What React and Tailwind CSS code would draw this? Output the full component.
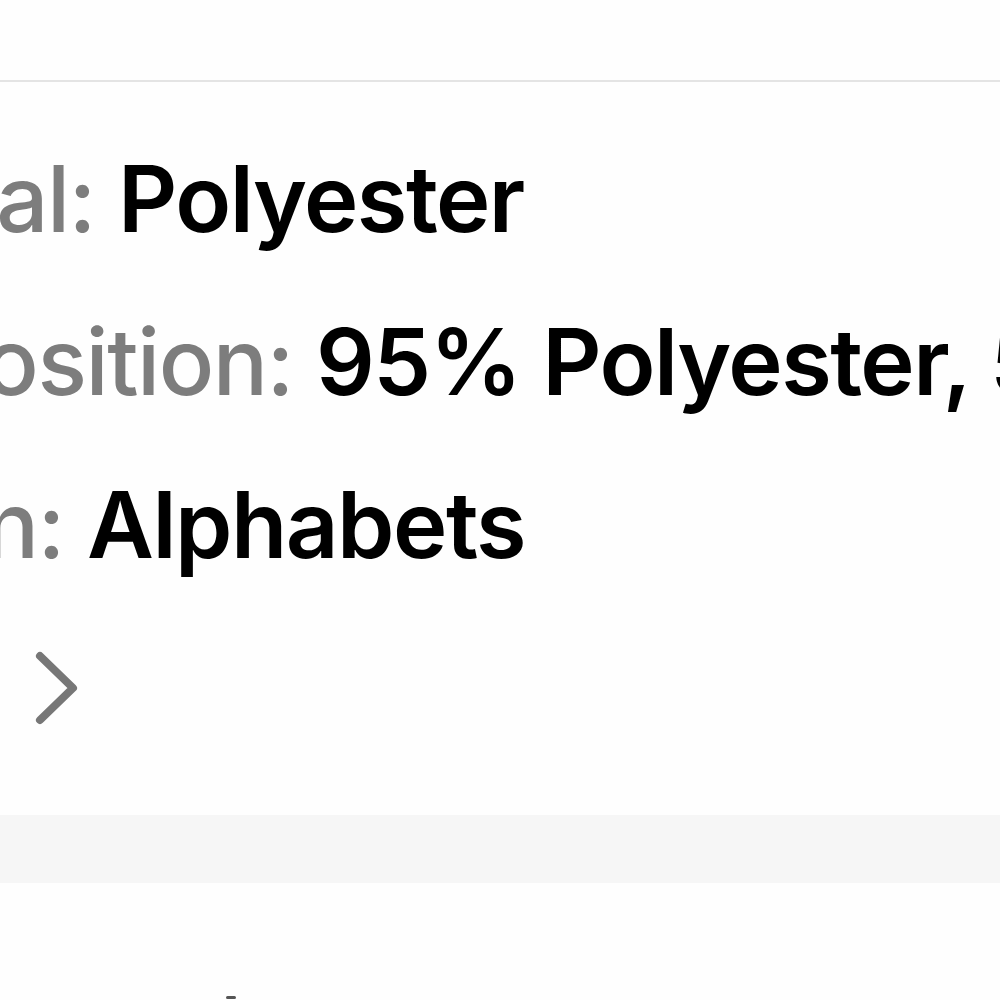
const rows = [
    { label: "Material:", value: "Polyester", box: "w-[118px]" },
    { label: "Composition:", value: "95% Polyester, 5% Spandex", box: "w-[316px]" },
    { label: "Pattern:", value: "Alphabets", box: "w-[87px]" },
];

export default function App() {
    return (
        <div className="h-[1000px] w-[1000px] overflow-hidden bg-[#fefefe] font-['Inter','Liberation_Sans',sans-serif]">
            {/* ヘッダー下の区切り線 */}
            <div className="h-[80px]" />
            <div className="h-[2px] bg-[#e4e4e4]" />

            {/* 商品詳細 */}
            <div className="pt-[35px]">
                {rows.map(row => (
                    <div key={row.label} className="flex h-[163px] items-center whitespace-nowrap text-[92px] leading-[163px] tracking-[-1.5px]">
                        <div className={`flex shrink-0 justify-end overflow-hidden font-medium text-[#7d7d7d] ${row.box}`}>
                            <span className="shrink-0">{row.label}&nbsp;</span>
                        </div>
                        <span className="font-semibold text-black">{row.value}</span>
                    </div>
                ))}

                {/* もっと見る */}
                <div className="flex h-[163px] items-center pl-[30px]">
                    <svg width="50" height="80" viewBox="0 0 50 80" fill="none">
                        <polyline points="10,8 43,40 10,72" stroke="#777777" strokeWidth="8" strokeLinecap="round" strokeLinejoin="round" />
                    </svg>
                </div>
            </div>

            <div className="mt-[46px] h-[68px] bg-[#f6f6f6]" />

            {/* 次のセクション */}
            <div className="flex h-[117px] items-end pb-[1px] pl-[226px]">
                <div className="h-[3px] w-[10px] rounded-full bg-[#555555]" />
            </div>
        </div>
    );
}
